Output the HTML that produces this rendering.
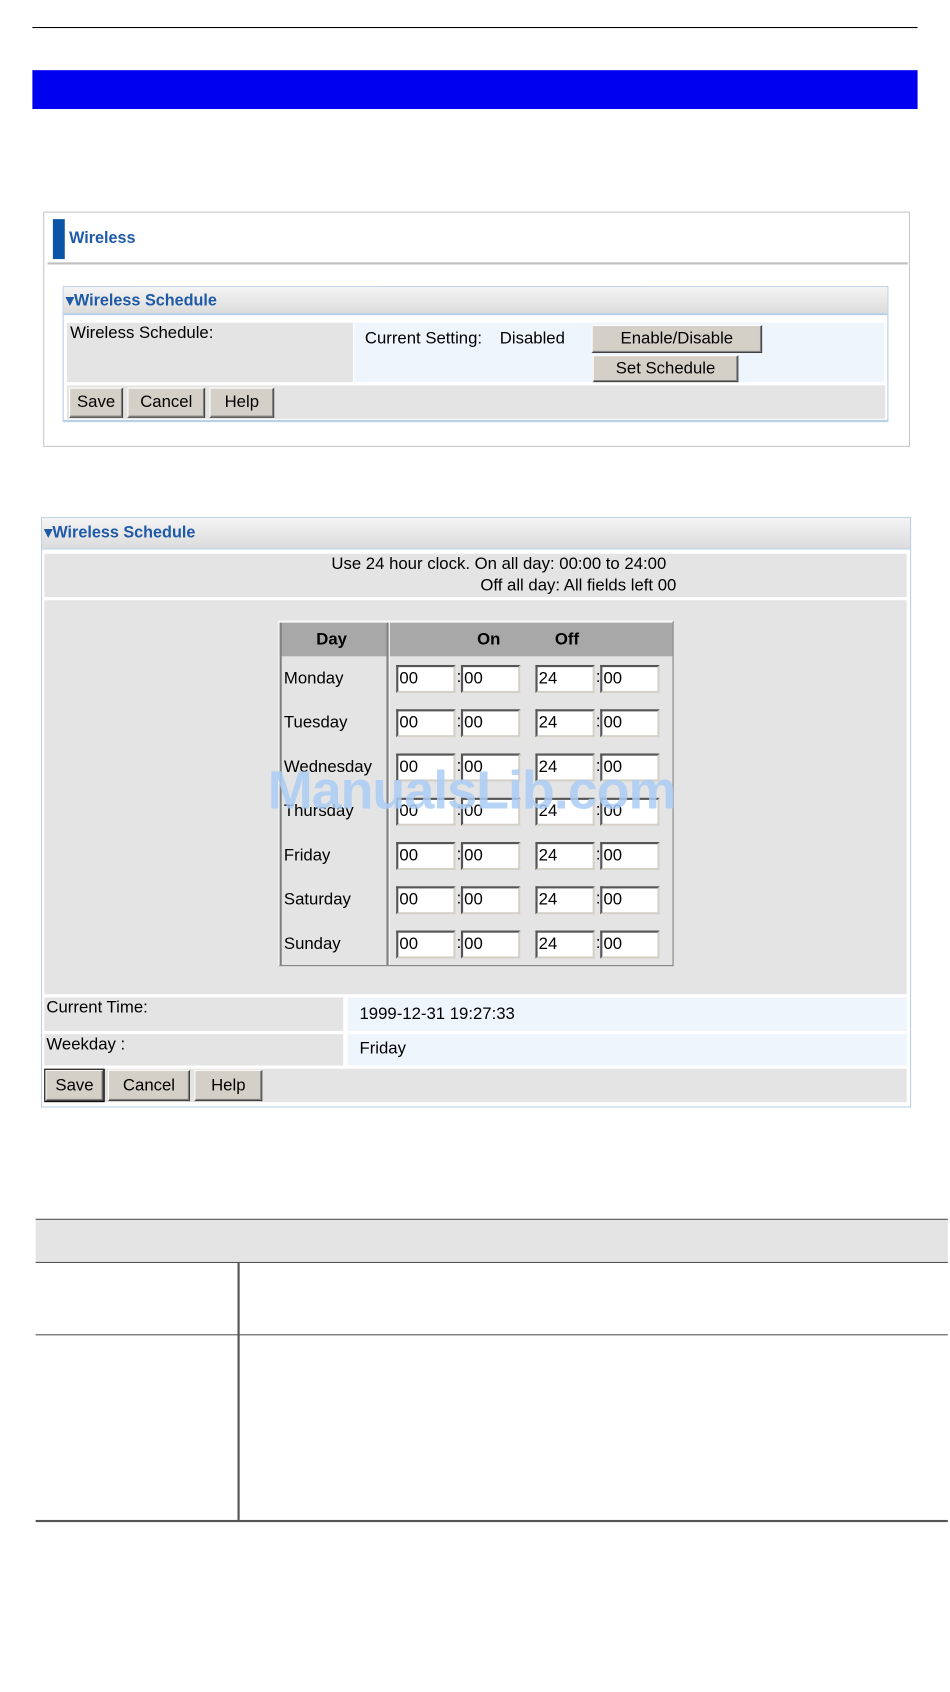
<!DOCTYPE html>
<html><head><meta charset="utf-8"><style>
body{margin:0;width:950px;height:1692px;background:#fff;position:relative;font-family:"Liberation Sans",Arial,sans-serif;font-size:15.5px;color:#000;overflow:hidden}
#w{position:absolute;left:0;top:0;width:880px;height:1567px;transform:scale(1.0795);transform-origin:0 0}
.a{position:absolute;box-sizing:border-box}
.t{position:absolute;white-space:nowrap;font-size:15.5px}
.btn{position:absolute;box-sizing:border-box;background:#d4d0c8;border:1px solid;border-color:#fff #404040 #404040 #fff;box-shadow:inset -1px -1px #808080;text-align:center;font-size:15.5px;line-height:23px}
.in{position:absolute;box-sizing:border-box;width:55px;height:26px;background:#fff;border:2px solid;border-color:#555 #d4d0c8 #d4d0c8 #555;font-size:15.5px;line-height:22px;padding-left:1px}
.hd{position:absolute;box-sizing:border-box;background:linear-gradient(#f4f4f4,#dcdcdc);color:#1f5aa8;font-weight:bold;font-size:15px}
.lb{color:#1f5aa8}
</style></head><body><div id="w">
<div class="a" style="left:30px;top:25px;width:820px;height:1px;background:#000"></div>
<div class="a" style="left:30px;top:65px;width:820px;height:36px;background:#0000f0"></div>

<div class="a" style="left:40px;top:196px;width:803px;height:218px;border:1px solid #c8c8c8"></div>
<div class="a" style="left:49px;top:203px;width:11px;height:37px;background:#0b55a8"></div>
<div class="t lb" style="left:64px;top:212px;font-weight:bold;font-size:15px">Wireless</div>
<div class="a" style="left:44px;top:243px;width:797px;height:2px;background:#c0c0c0"></div>
<div class="a" style="left:58px;top:265px;width:765px;height:126px;border:1px solid #b8d0e8;border-bottom-width:2px"></div>
<div class="hd" style="left:59px;top:266px;width:763px;height:26px;border-bottom:2px solid #b8d0e8;padding:3px 0 0 2px">▾Wireless Schedule</div>
<div class="a" style="left:62px;top:299px;width:265px;height:55px;background:#e4e4e4"></div>
<div class="t" style="left:65px;top:300px">Wireless Schedule:</div>
<div class="a" style="left:328px;top:299px;width:491px;height:55px;background:#eef5fd"></div>
<div class="t" style="left:338px;top:305px">Current Setting:</div>
<div class="t" style="left:463px;top:305px">Disabled</div>
<div class="btn" style="left:548px;top:301px;width:158px;height:26px">Enable/Disable</div>
<div class="btn" style="left:549px;top:329px;width:135px;height:25px">Set Schedule</div>
<div class="a" style="left:62px;top:357px;width:758px;height:31px;background:#e4e4e4"></div>
<div class="btn" style="left:64px;top:359px;width:50px;height:28px;line-height:26px">Save</div>
<div class="btn" style="left:118px;top:359px;width:72px;height:28px;line-height:26px">Cancel</div>
<div class="btn" style="left:194px;top:359px;width:60px;height:28px;line-height:26px">Help</div>

<div class="a" style="left:38px;top:479px;width:806px;height:547px;border:1px solid #b8d0e8"></div>
<div class="hd" style="left:39px;top:480px;width:804px;height:29px;border-bottom:1px solid #b8d0e8;padding:4px 0 0 2px">▾Wireless Schedule</div>
<div class="a" style="left:41px;top:513px;width:799px;height:40px;background:#e4e4e4"></div>
<div class="t" style="left:307px;top:514px">Use 24 hour clock. On all day: 00:00 to 24:00</div>
<div class="t" style="left:445px;top:534px">Off all day: All fields left 00</div>
<div class="a" style="left:41px;top:556px;width:799px;height:365px;background:#e4e4e4"></div>
<div class="a" style="left:258px;top:575px;width:366px;height:320px;border:1px solid;border-color:#fff #808080 #808080 #fff"></div>
<div class="a" style="left:259px;top:577px;width:99px;height:31px;background:#a8a8a8;border-left:2px solid #808080"></div>
<div class="a" style="left:361px;top:577px;width:262px;height:31px;background:#a8a8a8"></div>
<div class="a" style="left:259px;top:608px;width:2px;height:286px;background:#808080"></div>
<div class="a" style="left:358px;top:577px;width:3px;height:317px;border-left:2px solid #808080;border-right:1px solid #fff"></div>
<div class="t" style="left:293px;top:584px;font-weight:bold">Day</div>
<div class="t" style="left:442px;top:584px;font-weight:bold">On</div>
<div class="t" style="left:514px;top:584px;font-weight:bold">Off</div>

<div class="t" style="left:263px;top:620px">Monday</div>
<div class="t" style="left:263px;top:661px">Tuesday</div>
<div class="t" style="left:263px;top:702px">Wednesday</div>
<div class="t" style="left:263px;top:743px">Thursday</div>
<div class="t" style="left:263px;top:784px">Friday</div>
<div class="t" style="left:263px;top:825px">Saturday</div>
<div class="t" style="left:263px;top:866px">Sunday</div>

<div class="in" style="left:367px;top:616px">00</div><div class="t" style="left:423px;top:619px">:</div><div class="in" style="left:427px;top:616px">00</div><div class="in" style="left:496px;top:616px">24</div><div class="t" style="left:552px;top:619px">:</div><div class="in" style="left:556px;top:616px">00</div>
<div class="in" style="left:367px;top:657px">00</div><div class="t" style="left:423px;top:660px">:</div><div class="in" style="left:427px;top:657px">00</div><div class="in" style="left:496px;top:657px">24</div><div class="t" style="left:552px;top:660px">:</div><div class="in" style="left:556px;top:657px">00</div>
<div class="in" style="left:367px;top:698px">00</div><div class="t" style="left:423px;top:701px">:</div><div class="in" style="left:427px;top:698px">00</div><div class="in" style="left:496px;top:698px">24</div><div class="t" style="left:552px;top:701px">:</div><div class="in" style="left:556px;top:698px">00</div>
<div class="in" style="left:367px;top:739px">00</div><div class="t" style="left:423px;top:742px">:</div><div class="in" style="left:427px;top:739px">00</div><div class="in" style="left:496px;top:739px">24</div><div class="t" style="left:552px;top:742px">:</div><div class="in" style="left:556px;top:739px">00</div>
<div class="in" style="left:367px;top:780px">00</div><div class="t" style="left:423px;top:783px">:</div><div class="in" style="left:427px;top:780px">00</div><div class="in" style="left:496px;top:780px">24</div><div class="t" style="left:552px;top:783px">:</div><div class="in" style="left:556px;top:780px">00</div>
<div class="in" style="left:367px;top:821px">00</div><div class="t" style="left:423px;top:824px">:</div><div class="in" style="left:427px;top:821px">00</div><div class="in" style="left:496px;top:821px">24</div><div class="t" style="left:552px;top:824px">:</div><div class="in" style="left:556px;top:821px">00</div>
<div class="in" style="left:367px;top:862px">00</div><div class="t" style="left:423px;top:865px">:</div><div class="in" style="left:427px;top:862px">00</div><div class="in" style="left:496px;top:862px">24</div><div class="t" style="left:552px;top:865px">:</div><div class="in" style="left:556px;top:862px">00</div>

<div class="t" style="left:248px;top:703px;font-size:50px;font-weight:bold;color:rgba(170,205,245,0.85);letter-spacing:-1px">ManualsLib.com</div>

<div class="a" style="left:41px;top:924px;width:277px;height:31px;background:#e4e4e4"></div>
<div class="t" style="left:43px;top:925px">Current Time:</div>
<div class="a" style="left:322px;top:924px;width:518px;height:31px;background:#eef5fd"></div>
<div class="t" style="left:333px;top:931px">1999-12-31 19:27:33</div>
<div class="a" style="left:41px;top:958px;width:277px;height:29px;background:#e4e4e4"></div>
<div class="t" style="left:43px;top:959px">Weekday :</div>
<div class="a" style="left:322px;top:958px;width:518px;height:29px;background:#eef5fd"></div>
<div class="t" style="left:333px;top:963px">Friday</div>
<div class="a" style="left:41px;top:990px;width:799px;height:31px;background:#e4e4e4"></div>
<div class="btn" style="left:42px;top:991px;width:54px;height:29px;line-height:27px;outline:1px solid #000">Save</div>
<div class="btn" style="left:100px;top:991px;width:76px;height:29px;line-height:27px">Cancel</div>
<div class="btn" style="left:180px;top:991px;width:63px;height:29px;line-height:27px">Help</div>

<div class="a" style="left:33px;top:1129px;width:845px;height:41px;background:#e4e4e4;border-top:1px solid #555;border-bottom:1px solid #555"></div>
<div class="a" style="left:33px;top:1236px;width:845px;height:1px;background:#555"></div>
<div class="a" style="left:33px;top:1408px;width:845px;height:2px;background:#555"></div>
<div class="a" style="left:220px;top:1170px;width:2px;height:238px;background:#555"></div>
</div></body></html>
